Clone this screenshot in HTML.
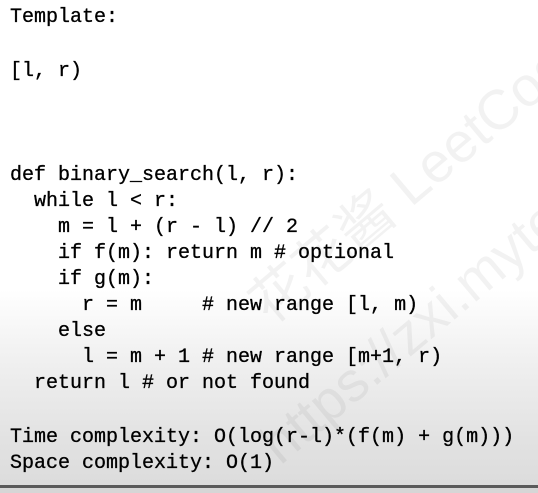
<!DOCTYPE html>
<html><head><meta charset="utf-8"><style>
html,body{margin:0;padding:0;width:538px;height:493px;overflow:hidden}
body{position:relative;
background:linear-gradient(to bottom,#ffffff 0px,#ffffff 290px,#f0f0f0 360px,#e2e2e2 440px,#dcdcdc 485px);
font-family:"Liberation Mono","DejaVu Sans Mono",monospace;font-size:20px;color:#000;}
.l{position:absolute;left:10px;height:26px;line-height:26px;white-space:pre;-webkit-text-stroke:0.3px #000;}
.clip{position:absolute;left:0;top:0;width:538px;height:485px;overflow:hidden}
.wm{position:absolute;white-space:nowrap;color:rgba(0,0,0,0.05);font-family:"Liberation Sans","Noto Sans CJK SC",sans-serif;font-size:56px;line-height:56px;transform-origin:left top;}
.bar{position:absolute;left:0;top:485px;width:538px;height:3px;background:#5a5a5a;}
.below{position:absolute;left:0;top:488px;width:538px;height:5px;background:#d6d6d6;}
</style></head><body>
<div class="clip">
<div class="wm" style="left:240px;top:290px;transform:rotate(-40deg)">花花酱 LeetCode</div>
<div class="wm" style="left:250px;top:430px;transform:rotate(-40deg)">https://zxi.mytech</div>
</div>
<div class="l" style="top:5px">Template:</div>
<div class="l" style="top:59px">[l, r)</div>
<div class="l" style="top:163px">def binary_search(l, r):</div>
<div class="l" style="top:189px">  while l &lt; r:</div>
<div class="l" style="top:215px">    m = l + (r - l) // 2</div>
<div class="l" style="top:241px">    if f(m): return m # optional</div>
<div class="l" style="top:267px">    if g(m):</div>
<div class="l" style="top:293px">      r = m     # new range [l, m)</div>
<div class="l" style="top:319px">    else</div>
<div class="l" style="top:345px">      l = m + 1 # new range [m+1, r)</div>
<div class="l" style="top:371px">  return l # or not found</div>
<div class="l" style="top:425px">Time complexity: O(log(r-l)*(f(m) + g(m)))</div>
<div class="l" style="top:451px">Space complexity: O(1)</div>
<div class="bar"></div><div class="below"></div>
</body></html>
